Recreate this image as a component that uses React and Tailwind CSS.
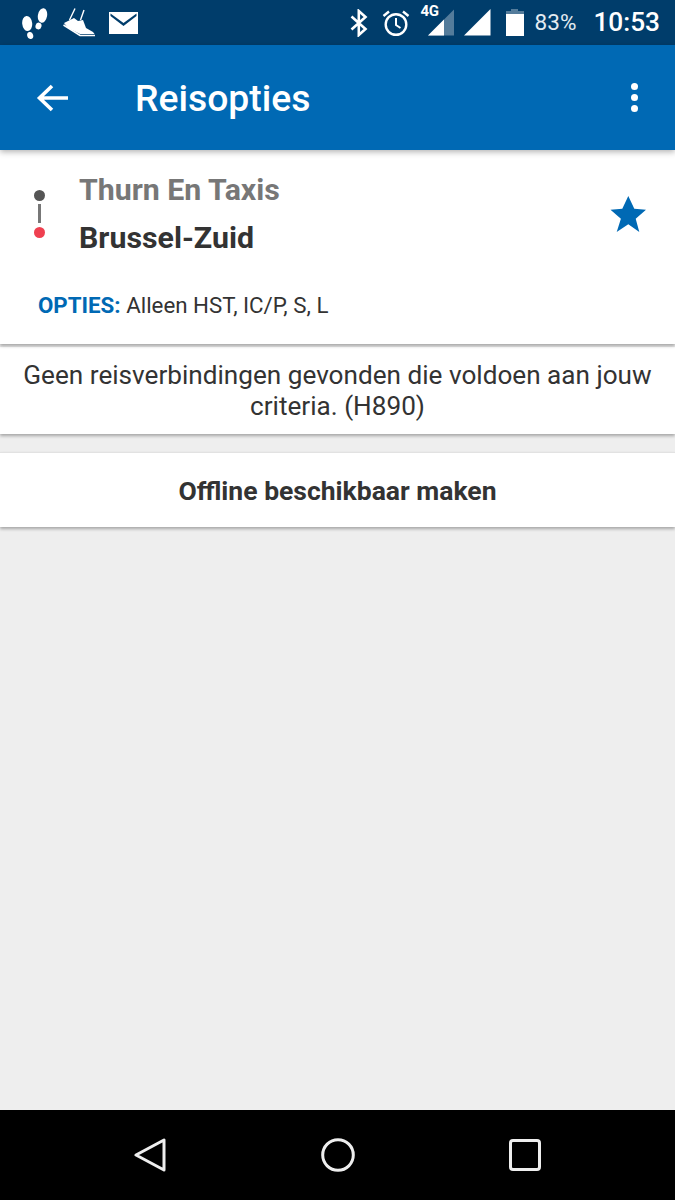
import React from "react";

const roboto = { fontFamily: "Roboto, sans-serif" };

function Steps() {
  return (
    <svg width="26" height="34" viewBox="0 0 26 34" fill="#fff">
      <ellipse cx="5.2" cy="17.5" rx="5" ry="7.6" transform="rotate(-6 5.2 17.5)" />
      <ellipse cx="8.2" cy="29.5" rx="3" ry="3.6" transform="rotate(-15 8.2 29.5)" />
      <ellipse cx="20.5" cy="9.5" rx="4.6" ry="7.4" transform="rotate(10 20.5 9.5)" />
      <ellipse cx="16.5" cy="20" rx="3" ry="3.4" transform="rotate(15 16.5 20)" />
    </svg>
  );
}
function Shoe() {
  return (
    <svg width="33" height="30" viewBox="0 0 33 30" fill="#fff">
      <path d="M1 15 L11 10 L15 13 L20 12 L23 20 L30 24 L31.5 26 L17 26 L5 20Z" />
      <path d="M0.5 17 L17 27.5 L32 27.5" fill="none" stroke="#fff" strokeWidth="1.6" />
      <path d="M12 0.5 L6.5 12 M21 2 L17.5 12" fill="none" stroke="#fff" strokeWidth="1.4" />
    </svg>
  );
}
function Mail() {
  return (
    <svg width="29" height="22" viewBox="0 0 29 22">
      <rect width="29" height="22" fill="#fff" />
      <path d="M1.5 1.5 L14.5 11 L27.5 1.5 L27.5 4 L14.5 14 L1.5 4Z" fill="#003d6b" />
    </svg>
  );
}
function Bluetooth() {
  return (
    <svg width="18" height="28" viewBox="0 0 18 28" fill="none" stroke="#fff" strokeWidth="2.6">
      <path d="M1.5 7.5 L15.5 20 L8.8 26 V2 L15.5 8 L1.5 20.5" />
    </svg>
  );
}
function Alarm() {
  return (
    <svg width="28" height="28" viewBox="0 0 28 28" fill="none" stroke="#fff" strokeWidth="2.4">
      <circle cx="14" cy="15.5" r="10.3" />
      <path d="M14 9 V16 L18.5 19" strokeWidth="2" />
      <path d="M1.5 7 L7 2.5 M26.5 7 L21 2.5" />
    </svg>
  );
}
function Signal4G() {
  return (
    <div className="relative w-[34px] h-[36px]">
      <span
        className="absolute left-0 top-[2px] text-[15px] leading-[18px] font-bold text-white tracking-[-0.5px]"
        style={roboto}
      >
        4G
      </span>
      <svg className="absolute left-0 top-0" width="34" height="36" viewBox="0 0 34 36">
        <path d="M33 9.5 V35.5 H7 Z" fill="#fff" fillOpacity="0.33" />
        <path d="M23 19.5 V35.5 H7 Z" fill="#fff" />
      </svg>
    </div>
  );
}
function Signal() {
  return (
    <svg width="27" height="27" viewBox="0 0 27 27">
      <path d="M26.5 0 V26.5 H0 Z" fill="#fff" />
    </svg>
  );
}
function Battery() {
  return (
    <svg width="18" height="27" viewBox="0 0 18 27">
      <path d="M5 0 H12 V2 H18 V5 H0 V2 H5Z" fill="#fff" fillOpacity="0.33" />
      <rect x="0" y="5" width="18" height="22" fill="#fff" />
    </svg>
  );
}

export default function App() {
  return (
    <div className="w-[675px] h-[1200px] flex flex-col bg-[#eeeeee] overflow-hidden" style={roboto}>
      <div className="h-[45px] shrink-0 bg-[#003d6b] flex items-center pl-[22px] pr-[15px] text-white">
        <Steps />
        <div className="ml-[15px]"><Shoe /></div>
        <div className="ml-[13px]"><Mail /></div>
        <div className="ml-auto"><Bluetooth /></div>
        <div className="ml-[14px]"><Alarm /></div>
        <div className="ml-[11px] mt-[-10px]"><Signal4G /></div>
        <div className="ml-[9px] mt-[-1px]"><Signal /></div>
        <div className="ml-[15px] mt-[-1px]"><Battery /></div>
        <span className="ml-[11px] text-[22.5px] text-[#e4ebf1] leading-none">83%</span>
        <span className="ml-[17px] text-[26.25px] font-medium leading-none">10:53</span>
      </div>

      <div className="h-[105px] shrink-0 bg-[#0069b4] flex items-center relative z-10 shadow-[0_2px_6px_rgba(0,0,0,0.3)]">
        <svg className="ml-[36px]" width="34" height="30" viewBox="0 0 34 30" fill="none" stroke="#fff" strokeWidth="3.6">
          <path d="M32 15 H4 M16 3 L3.5 15 L16 27" />
        </svg>
        <h1 className="ml-[65px] mt-[3px] text-[37.3px] font-medium text-white leading-none">Reisopties</h1>
        <div className="ml-auto mr-[37px] mt-[-1px] flex flex-col gap-[4px]">
          <span className="w-[7px] h-[7px] rounded-full bg-white" />
          <span className="w-[7px] h-[7px] rounded-full bg-white" />
          <span className="w-[7px] h-[7px] rounded-full bg-white" />
        </div>
      </div>

      <div className="h-[194px] shrink-0 bg-white shadow-[0_2px_3px_rgba(0,0,0,0.3)] relative flex flex-col">
        <div className="flex items-start pt-[22px]">
          <div className="ml-[34px] mt-[18px] w-[11px] flex flex-col items-center">
            <span className="w-[11px] h-[11px] rounded-full bg-[#555555]" />
            <span className="w-[3px] h-[19px] mt-[3px] bg-[#777777]" />
            <span className="w-[11px] h-[11px] rounded-full bg-[#ef4050] mt-[4px]" />
          </div>
          <div className="ml-[34px] flex flex-col">
            <div className="text-[30.3px] leading-[35px] font-bold text-[#777777]">Thurn En Taxis</div>
            <div className="text-[30.3px] leading-[35px] font-bold text-[#333333] mt-[13px]">Brussel-Zuid</div>
          </div>
          <svg className="ml-auto mr-[29px] mt-[24px]" width="36" height="36" viewBox="0 0 36 36" fill="#0069b4">
            <path d="M18.3 0 L24.3 12.7 L36 13.7 L25.7 22.7 L29.3 36 L18.3 28.3 L6.7 36 L10.9 22.7 L0.5 13.7 L12.3 12.7Z" />
          </svg>
        </div>
        <div className="ml-[38px] mt-[37px] text-[22.3px] leading-[26px] text-[#333333]">
          <span className="font-bold text-[#0069b4]">OPTIES:</span> Alleen HST, IC/P, S, L
        </div>
      </div>

      <div className="mt-[3px] h-[87px] shrink-0 bg-white shadow-[0_2px_3px_rgba(0,0,0,0.3)] flex items-center justify-center text-center px-[20px] text-[26.15px] leading-[31px] text-[#333333]">
        Geen reisverbindingen gevonden die voldoen aan jouw criteria. (H890)
      </div>

      <div className="mt-[18px] pt-[2px] h-[75px] shrink-0 bg-white border-t border-[#e2e2e2] shadow-[0_2px_3px_rgba(0,0,0,0.3)] flex items-center justify-center text-[26.5px] font-bold text-[#333333]">
        Offline beschikbaar maken
      </div>

      <div className="flex-1" />

      <div className="h-[90px] shrink-0 bg-black flex items-center justify-between pl-[134px] pr-[134px]">
        <svg className="mt-[-1px]" width="32" height="34" viewBox="0 0 32 34" fill="none" stroke="#eeeeee" strokeWidth="3" strokeLinejoin="round">
          <path d="M30 2 V32 L2 17Z" />
        </svg>
        <svg className="mt-[-1px]" width="34" height="34" viewBox="0 0 34 34" fill="none" stroke="#eeeeee" strokeWidth="3">
          <circle cx="17" cy="17" r="15.3" />
        </svg>
        <svg className="mt-[-1px]" width="32" height="32" viewBox="0 0 32 32" fill="none" stroke="#eeeeee" strokeWidth="3">
          <rect x="1.5" y="1.5" width="29" height="29" rx="2.5" />
        </svg>
      </div>
    </div>
  );
}
